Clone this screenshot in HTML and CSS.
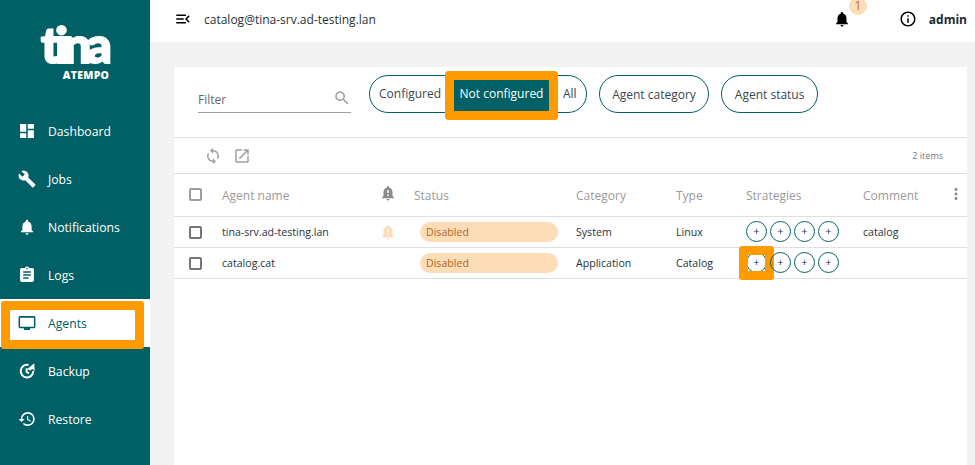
FILE: index.html
```html
<!DOCTYPE html>
<html lang="en">
<head>
    <meta charset="UTF-8">
    <meta name="viewport" content="width=device-width, initial-scale=1.0">
    <title>Tina - Agents</title>
    <link rel="stylesheet" href="styles.css">
</head>
<body>
    <aside class="sidebar">
        <div class="logo">
            <div class="logo-name">tina</div>
            <div class="logo-sub">ATEMPO</div>
        </div>
        <nav class="nav">
            <a class="nav-item">
                <svg class="nav-icon" viewBox="0 0 24 24"><path d="M3 13h8V3H3v10zm0 8h8v-6H3v6zm10 0h8V11h-8v10zm0-18v6h8V3h-8z"/></svg>
                Dashboard
            </a>
            <a class="nav-item">
                <svg class="nav-icon" viewBox="0 0 24 24"><path d="M22.7 19l-9.1-9.1c.9-2.3.4-5-1.5-6.9-2-2-5-2.4-7.4-1.3L9 6 6 9 1.6 4.7C.4 7.1.9 10.1 2.9 12.1c1.9 1.9 4.6 2.4 6.9 1.5l9.1 9.1c.4.4 1 .4 1.4 0l2.3-2.3c.5-.4.5-1.1.1-1.4z"/></svg>
                Jobs
            </a>
            <a class="nav-item">
                <svg class="nav-icon" viewBox="0 0 24 24"><path d="M12 22c1.1 0 2-.9 2-2h-4c0 1.1.89 2 2 2zm6-6v-5c0-3.07-1.64-5.64-4.5-6.32V4c0-.83-.67-1.5-1.5-1.5s-1.5.67-1.5 1.5v.68C7.63 5.36 6 7.92 6 11v5l-2 2v1h16v-1l-2-2z"/></svg>
                Notifications
            </a>
            <a class="nav-item">
                <svg class="nav-icon" viewBox="0 0 24 24"><path d="M19 3h-4.18C14.4 1.84 13.3 1 12 1c-1.3 0-2.4.84-2.82 2H5c-1.1 0-2 .9-2 2v14c0 1.1.9 2 2 2h14c1.1 0 2-.9 2-2V5c0-1.1-.9-2-2-2zm-7 0c.55 0 1 .45 1 1s-.45 1-1 1-1-.45-1-1 .45-1 1-1zm2 14H7v-2h7v2zm3-4H7v-2h10v2zm0-4H7V7h10v2z"/></svg>
                Logs
            </a>
            <a class="nav-item active">
                <svg class="nav-icon" viewBox="0 0 24 24"><path d="M21 3H3c-1.1 0-2 .9-2 2v12c0 1.1.9 2 2 2h5v2h8v-2h5c1.1 0 1.99-.9 1.99-2L23 5c0-1.1-.9-2-2-2zm0 14H3V5h18v12z"/></svg>
                Agents
                <span class="mark mark-nav"></span>
            </a>
            <a class="nav-item">
                <svg class="nav-icon" viewBox="0 0 24 24">
                    <path class="arc" d="M14 4.2A8.2 8.2 0 1 0 20.2 12"/>
                    <path d="M12.5 9.5L21.5 2l.5 10-3-2.5-3 2z"/>
                    <path class="arc" d="M11.5 8.5V13l3 2"/>
                </svg>
                Backup
            </a>
            <a class="nav-item">
                <svg class="nav-icon" viewBox="0 0 24 24"><path d="M13 3c-4.97 0-9 4.03-9 9H1l3.89 3.89.07.14L9 12H6c0-3.87 3.13-7 7-7s7 3.13 7 7-3.13 7-7 7c-1.93 0-3.68-.79-4.94-2.06l-1.42 1.42C8.27 19.99 10.51 21 13 21c4.97 0 9-4.03 9-9s-4.03-9-9-9zm-1 5v5l4.28 2.54.72-1.21-3.5-2.08V8H12z"/></svg>
                Restore
            </a>
        </nav>
    </aside>

    <div class="main">
        <header class="topbar">
            <svg class="menu-icon" viewBox="0 0 24 24"><path d="M3 18h13v-2H3v2zm0-5h10v-2H3v2zm0-7v2h13V6H3zm18 9.59L17.42 12 21 8.41 19.59 7l-5 5 5 5L21 15.59z"/></svg>
            <span class="host">catalog@tina-srv.ad-testing.lan</span>
            <div class="top-right">
                <span class="bell">
                    <svg viewBox="0 0 24 24"><path d="M12 22c1.1 0 2-.9 2-2h-4c0 1.1.89 2 2 2zm6-6v-5c0-3.07-1.64-5.64-4.5-6.32V4c0-.83-.67-1.5-1.5-1.5s-1.5.67-1.5 1.5v.68C7.63 5.36 6 7.92 6 11v5l-2 2v1h16v-1l-2-2z"/></svg>
                    <span class="badge">1</span>
                </span>
                <svg class="info-icon" viewBox="0 0 24 24"><path d="M11 7h2v2h-2zm0 4h2v6h-2zm1-9C6.48 2 2 6.48 2 12s4.48 10 10 10 10-4.48 10-10S17.52 2 12 2zm0 18c-4.41 0-8-3.59-8-8s3.59-8 8-8 8 3.59 8 8-3.59 8-8 8z"/></svg>
                <span class="user">admin</span>
            </div>
        </header>

        <section class="card">
            <div class="filters">
                <label class="filter">
                    <span>Filter</span>
                    <svg viewBox="0 0 24 24"><path d="M15.5 14h-.79l-.28-.27C15.41 12.59 16 11.11 16 9.5 16 5.91 13.09 3 9.5 3S3 5.91 3 9.5 5.91 16 9.5 16c1.61 0 3.09-.59 4.23-1.57l.27.28v.79l5 4.99L20.49 19l-4.99-5zm-6 0C7.01 14 5 11.99 5 9.5S7.01 5 9.5 5 14 7.01 14 9.5 11.99 14 9.5 14z"/></svg>
                </label>
                <div class="segments">
                    <span class="segment">Configured</span>
                    <span class="segment selected">Not configured</span>
                    <span class="segment">All</span>
                </div>
                <span class="pill">Agent category</span>
                <span class="pill">Agent status</span>
            </div>

            <div class="toolbar">
                <svg viewBox="0 0 24 24"><path d="M12 4V1L8 5l4 4V6c3.31 0 6 2.69 6 6 0 1.01-.25 1.97-.7 2.8l1.46 1.46C19.54 15.03 20 13.57 20 12c0-4.42-3.58-8-8-8zm0 14c-3.31 0-6-2.69-6-6 0-1.01.25-1.97.7-2.8L5.24 7.74C4.46 8.97 4 10.43 4 12c0 4.42 3.58 8 8 8v3l4-4-4-4v3z"/></svg>
                <svg viewBox="0 0 24 24"><path d="M19 19H5V5h7V3H5c-1.11 0-2 .9-2 2v14c0 1.1.89 2 2 2h14c1.1 0 2-.9 2-2v-7h-2v7zM14 3v2h3.59l-9.83 9.83 1.41 1.41L19 6.41V10h2V3h-7z"/></svg>
                <span class="count">2 items</span>
            </div>

            <table class="agents">
                <colgroup>
                    <col class="c-check"><col class="c-name"><col class="c-alert"><col class="c-status">
                    <col class="c-cat"><col class="c-type"><col class="c-strat"><col class="c-comment">
                </colgroup>
                <thead>
                    <tr>
                        <th><span class="check head"></span></th>
                        <th>Agent name</th>
                        <th><svg class="alert-icon grey" viewBox="0 0 24 24"><path d="M18 16v-5c0-3.07-1.64-5.64-4.5-6.32V4c0-.83-.67-1.5-1.5-1.5s-1.5.67-1.5 1.5v.68C7.63 5.36 6 7.92 6 11v5l-2 2v1h16v-1l-2-2zm-5 0h-2v-2h2v2zm0-4h-2V8h2v4zm-1 10c1.1 0 2-.9 2-2h-4c0 1.1.9 2 2 2z"/></svg></th>
                        <th>Status</th>
                        <th>Category</th>
                        <th>Type</th>
                        <th>Strategies</th>
                        <th>Comment
                            <svg class="more" viewBox="0 0 24 24"><path d="M12 8c1.1 0 2-.9 2-2s-.9-2-2-2-2 .9-2 2 .9 2 2 2zm0 2c-1.1 0-2 .9-2 2s.9 2 2 2 2-.9 2-2-.9-2-2-2zm0 6c-1.1 0-2 .9-2 2s.9 2 2 2 2-.9 2-2-.9-2-2-2z"/></svg>
                        </th>
                    </tr>
                </thead>
                <tbody>
                    <tr>
                        <td><span class="check"></span></td>
                        <td>tina-srv.ad-testing.lan</td>
                        <td><svg class="alert-icon peach" viewBox="0 0 24 24"><path d="M18 16v-5c0-3.07-1.64-5.64-4.5-6.32V4c0-.83-.67-1.5-1.5-1.5s-1.5.67-1.5 1.5v.68C7.63 5.36 6 7.92 6 11v5l-2 2v1h16v-1l-2-2zm-5 0h-2v-2h2v2zm0-4h-2V8h2v4zm-1 10c1.1 0 2-.9 2-2h-4c0 1.1.9 2 2 2z"/></svg></td>
                        <td><span class="state">Disabled</span></td>
                        <td>System</td>
                        <td>Linux</td>
                        <td><div class="strats"><span class="add">+</span><span class="add">+</span><span class="add">+</span><span class="add">+</span></div></td>
                        <td>catalog</td>
                    </tr>
                    <tr>
                        <td><span class="check"></span></td>
                        <td>catalog.cat</td>
                        <td></td>
                        <td><span class="state">Disabled</span></td>
                        <td>Application</td>
                        <td>Catalog</td>
                        <td><div class="strats"><span class="add">+<span class="mark mark-add"></span></span><span class="add">+</span><span class="add">+</span><span class="add">+</span></div></td>
                        <td></td>
                    </tr>
                </tbody>
            </table>
        </section>
    </div>
</body>
</html>
```

FILE: styles.css
```css
* {
    box-sizing: border-box;
}
html, body {
    height: 100%;
}
body {
    margin: 0;
    display: flex;
    overflow: hidden;
    background-color: #f2f2f2;
    font-family: "Open Sans", "Noto Sans", sans-serif;
    font-size: 12px;
    color: #263238;
}

/* sidebar */
.sidebar {
    width: 150px;
    flex: none;
    background-color: #006066;
    color: #fff;
}
.logo {
    height: 107px;
    padding-top: 19px;
    text-align: center;
}
.logo-name {
    font-family: "Lato", sans-serif;
    font-weight: 900;
    font-size: 50px;
    line-height: 50px;
    letter-spacing: -5px;
    -webkit-text-stroke: 2px #fff;
    margin-left: -2px;
}
.logo-sub {
    font-weight: 800;
    font-size: 10.5px;
    line-height: 12px;
    letter-spacing: 0.3px;
    margin: 0 0 0 22px;
}
.nav-item {
    position: relative;
    display: flex;
    align-items: center;
    height: 48px;
    padding-left: 19px;
    gap: 13px;
    font-size: 12.2px;
}
.nav-icon {
    width: 16px;
    height: 16px;
    fill: #fff;
    transform: scale(1.15);
}
.nav-icon .arc {
    fill: none;
    stroke: #fff;
    stroke-width: 2.6;
}
.nav-item.active {
    background-color: #fff;
    color: #006066;
}
.nav-item.active .nav-icon {
    fill: #006066;
}

/* orange highlights drawn over the screenshot */
.mark {
    position: absolute;
    border: 9px solid #ff9a00;
    border-radius: 3px;
    pointer-events: none;
}
.mark-nav {
    left: 1px;
    top: 2px;
    width: 143px;
    height: 48px;
}
.mark-add {
    left: -8px;
    top: -7px;
    width: 35px;
    height: 34px;
}

/* top bar */
.main {
    flex: 1;
    min-width: 0;
}
.topbar {
    display: flex;
    align-items: center;
    height: 42px;
    padding: 0 8px 4px 24px;
    background-color: #fff;
}
.menu-icon {
    width: 18px;
    height: 18px;
    flex: none;
}
.host {
    margin-left: 12px;
}
.top-right {
    display: flex;
    align-items: center;
    margin-left: auto;
}
.bell {
    position: relative;
    display: flex;
    margin-right: 48px;
}
.bell svg {
    width: 18px;
    height: 18px;
}
.badge {
    position: absolute;
    left: 16px;
    top: -13px;
    width: 18px;
    height: 18px;
    border-radius: 50%;
    background-color: #fddcb8;
    color: #c4702a;
    font-size: 12px;
    line-height: 18px;
    text-align: center;
}
.info-icon {
    width: 18px;
    height: 18px;
}
.user {
    margin-left: 12px;
    font-weight: 700;
    color: #1a2a33;
}

/* card */
.card {
    margin: 25px 8px 0 24px;
    height: 400px;
    background-color: #fff;
}
.filters {
    display: flex;
    align-items: flex-start;
    height: 71px;
    padding: 8px 0 0 24px;
    border-bottom: 1px solid #e0e0e0;
}
.filter {
    display: flex;
    align-items: center;
    justify-content: space-between;
    width: 153px;
    height: 30px;
    margin-top: 8px;
    padding-top: 4px;
    border-bottom: 1px solid #9e9e9e;
    color: #5f6b70;
}
.filter svg {
    width: 18px;
    height: 18px;
    margin-top: -4px;
    fill: #9e9e9e;
}
.segments {
    display: flex;
    height: 38px;
    margin-left: 18px;
    border: 1px solid #006066;
    border-radius: 19px;
}
.segment {
    padding: 0 4px 0 9px;
    line-height: 35px;
    color: #37474f;
}
.segment.selected {
    align-self: flex-start;
    position: relative;
    height: 31px;
    margin: 4px 7px 0 9px;
    padding: 0 5.5px;
    line-height: 28px;
    border-radius: 1px;
    background-color: #006066;
    color: #fff;
    box-shadow: 0 0 0 9px #ff9a00;
}
.segment:last-child {
    padding: 0 9px 0 7px;
}
.pill {
    height: 38px;
    margin-left: 12px;
    padding: 0 12.5px;
    line-height: 37px;
    border: 1px solid #006066;
    border-radius: 19px;
    color: #37474f;
}
.toolbar {
    display: flex;
    align-items: center;
    gap: 11px;
    height: 36px;
    padding: 0 24px 0 30px;
    border-bottom: 1px solid #e0e0e0;
}
.toolbar svg {
    width: 18px;
    height: 18px;
    fill: #a0a0a0;
}
.count {
    margin-left: auto;
    font-size: 9px;
    color: #757575;
}

/* table */
.agents {
    width: 100%;
    table-layout: fixed;
    border-collapse: collapse;
}
.c-check { width: 48px; }
.c-name { width: 153px; }
.c-alert { width: 39px; }
.c-status { width: 162px; }
.c-cat { width: 100px; }
.c-type { width: 70px; }
.c-strat { width: 117px; }
.agents th {
    position: relative;
    height: 42px;
    padding: 2px 0 0;
    text-align: left;
    font-weight: 400;
    color: #9a9a9a;
    border-bottom: 1px solid #e0e0e0;
}
.agents td {
    height: 31px;
    padding: 0;
    font-size: 10.6px;
    border-bottom: 1px solid #e0e0e0;
    color: #263238;
}
.check {
    display: block;
    width: 13px;
    height: 13px;
    margin: 2px 0 0 15px;
    border: 2px solid #757575;
    border-radius: 2px;
}
.check.head {
    margin-top: -2px;
    border-color: #9e9e9e;
}
.alert-icon {
    display: block;
    width: 18px;
    height: 18px;
    margin-left: 4px;
}
.alert-icon.grey {
    fill: #8a8a8a;
    margin-top: -6px;
}
.alert-icon.peach {
    fill: #fddcb8;
}
.state {
    display: block;
    width: 138px;
    height: 20px;
    margin-left: 6px;
    padding-left: 6px;
    line-height: 20px;
    border-radius: 10px;
    background-color: #fddcb8;
    color: #b5651d;
}
.strats {
    display: flex;
    gap: 3px;
}
.add {
    position: relative;
    display: block;
    width: 21px;
    height: 21px;
    border: 1px solid #006066;
    border-radius: 50%;
    line-height: 18px;
    text-align: center;
    font-size: 11px;
}
.more {
    position: absolute;
    right: 2.5px;
    top: 11px;
    width: 18px;
    height: 18px;
    fill: #8a8a8a;
}
```
